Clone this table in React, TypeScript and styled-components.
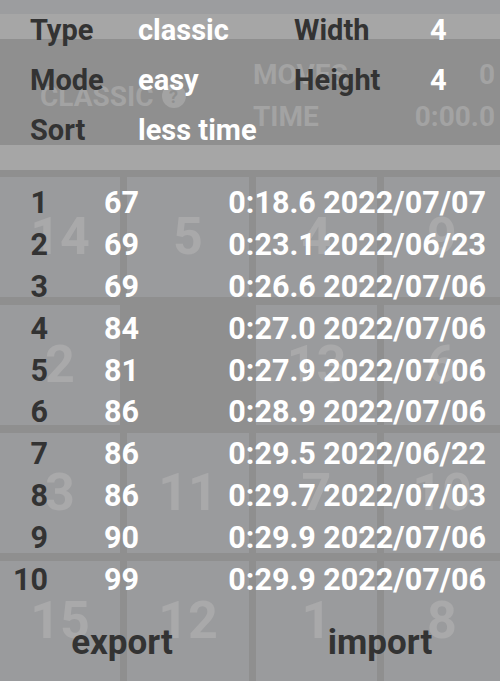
import styled, { createGlobalStyle } from "styled-components";

const GlobalStyle = createGlobalStyle`
  html, body {
    margin: 0;
    padding: 0;
    background: #8f8f8f;
  }
  body {
    font-family: Roboto, "Liberation Sans", sans-serif;
  }
`;

const Screen = styled.div`
  position: relative;
  width: 500px;
  height: 681px;
  overflow: hidden;
  display: flex;
  flex-direction: column;
  background: #8f8f8f;
`;

const TopStrip = styled.div`
  height: 14px;
  background: #9c9d9f;
`;

const Band = styled.div<{ $h: number }>`
  height: ${(p) => p.$h}px;
  background: #a6a6a6;
`;

const Header = styled.div`
  height: 108px;
  background: #8f8f8f;
  display: grid;
  grid-template-columns: 253px 1fr;
  align-items: center;
  color: #a3a3a3;
  font-weight: 700;
  font-size: 28px;
`;

const Title = styled.div`
  display: flex;
  align-items: center;
  gap: 8px;
  padding-left: 40px;
  padding-top: 8px;
`;

const HelpDot = styled.span`
  width: 24px;
  height: 24px;
  border-radius: 50%;
  background: #a3a3a3;
  color: #8f8f8f;
  font-size: 18px;
  display: inline-flex;
  align-items: center;
  justify-content: center;
`;

const Stats = styled.div`
  display: grid;
  grid-template-columns: 1fr auto;
  row-gap: 9px;
  padding-right: 5px;
  padding-top: 6px;
`;

const Board = styled.div`
  flex: 1;
  display: grid;
  grid-template-columns: 120px 122px 121px 1fr;
  grid-template-rows: 120px 120px 120px 120px;
  gap: 8px 7px;
  padding-top: 7px;
  background: #8f8f8f;
`;

const Tile = styled.div<{ $empty?: boolean }>`
  background: ${(p) => (p.$empty ? "#8f8f8f" : "#9a9b9d")};
  color: #a9a9aa;
  font-weight: 700;
  font-size: 52px;
  display: flex;
  align-items: center;
  justify-content: center;
`;

const Overlay = styled.div`
  position: absolute;
  inset: 0;
  display: flex;
  flex-direction: column;
  font-weight: 700;
  font-size: 29px;
`;

const InfoGrid = styled.div`
  display: grid;
  grid-template-columns: 108px 156px 136px 1fr;
  grid-auto-rows: 50px;
  align-items: center;
  padding: 5px 0 0 30px;
`;

const Label = styled.div`
  color: #333333;
`;

const Value = styled.div`
  color: #ffffff;
  white-space: nowrap;
`;

const Scores = styled.div`
  margin-top: 27px;
  display: flex;
  flex-direction: column;
`;

const ScoreRow = styled.div`
  height: 41.8px;
  display: grid;
  grid-template-columns: 48px auto 1fr;
  align-items: center;
  padding-right: 14px;
  color: #ffffff;
  font-size: 30.5px;
`;

const Rank = styled.div`
  color: #333333;
  text-align: right;
`;

const Moves = styled.div`
  padding-left: 56px;
`;

const When = styled.div`
  text-align: right;
  white-space: nowrap;
`;

const Buttons = styled.div`
  flex: 1;
  display: grid;
  grid-template-columns: 1fr 1fr;
  align-items: center;
  padding-top: 4px;
`;

const ActionButton = styled.button<{ $shift: number }>`
  background: none;
  border: none;
  font: inherit;
  font-weight: 700;
  font-size: 35px;
  color: #333333;
  padding: 0;
  transform: translateX(${(p) => p.$shift}px);
`;

const tiles = [14, 5, 4, 9, 2, 0, 13, 6, 3, 11, 7, 10, 15, 12, 1, 8];

const scores = [
  [67, "0:18.6", "2022/07/07"],
  [69, "0:23.1", "2022/06/23"],
  [69, "0:26.6", "2022/07/06"],
  [84, "0:27.0", "2022/07/06"],
  [81, "0:27.9", "2022/07/06"],
  [86, "0:28.9", "2022/07/06"],
  [86, "0:29.5", "2022/06/22"],
  [86, "0:29.7", "2022/07/03"],
  [90, "0:29.9", "2022/07/06"],
  [99, "0:29.9", "2022/07/06"],
] as const;

export default function App() {
  return (
    <>
      <GlobalStyle />
      <Screen>
        <TopStrip />
        <Band $h={26} />
        <Header>
          <Title>
            CLASSIC <HelpDot>?</HelpDot>
          </Title>
          <Stats>
            <span>MOVES</span>
            <span style={{ textAlign: "right" }}>0</span>
            <span>TIME</span>
            <span>0:00.0</span>
          </Stats>
        </Header>
        <Band $h={25} />
        <Board>
          {tiles.map((n, i) => (
            <Tile key={i} $empty={n === 0}>
              {n || ""}
            </Tile>
          ))}
        </Board>

        <Overlay>
          <InfoGrid>
            <Label>Type</Label>
            <Value>classic</Value>
            <Label>Width</Label>
            <Value>4</Value>
            <Label>Mode</Label>
            <Value>easy</Value>
            <Label>Height</Label>
            <Value>4</Value>
            <Label>Sort</Label>
            <Value>less time</Value>
          </InfoGrid>
          <Scores>
            {scores.map(([moves, time, date], i) => (
              <ScoreRow key={i}>
                <Rank>{i + 1}</Rank>
                <Moves>{moves}</Moves>
                <When>
                  {time} {date}
                </When>
              </ScoreRow>
            ))}
          </Scores>
          <Buttons>
            <ActionButton $shift={-3}>export</ActionButton>
            <ActionButton $shift={5}>import</ActionButton>
          </Buttons>
        </Overlay>
      </Screen>
    </>
  );
}
